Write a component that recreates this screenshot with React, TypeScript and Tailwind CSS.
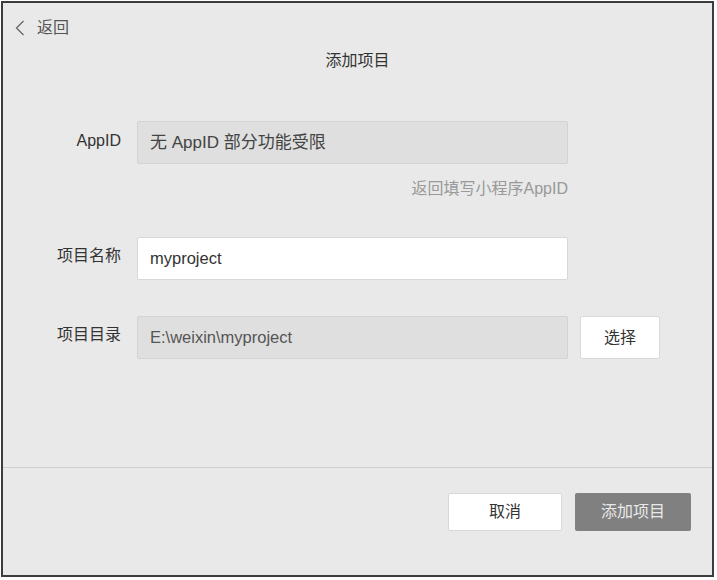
import React from "react";

const font = { fontFamily: '"Liberation Sans", "Noto Sans CJK SC", sans-serif' };

export default function App() {
  return (
    <div className="w-[717px] h-[580px] bg-white pl-[1px] pt-[1px] pr-[3px] pb-[3px]" style={font}>
      <div className="w-full h-full border-2 border-[#3c3c3c] bg-[#e8e9e8] flex flex-col text-[#333]">
        <div className="flex-1 flex flex-col">
          <div className="mt-[13px] h-[24px] pl-[12px] flex items-center gap-[12px] text-[#555]">
            <svg width="10" height="16" viewBox="0 0 10 16" fill="none">
              <path d="M8.5 1 L1.5 8 L8.5 15" stroke="#666" strokeWidth="1.3" />
            </svg>
            <span className="text-[16px] leading-none">返回</span>
          </div>
          <div className="mt-[11px] h-[20px] flex items-center justify-center text-[16px] text-[#333]">添加项目</div>

          <div className="mt-[50px] flex items-start">
            <div className="w-[118px] text-right text-[16px] pt-[9px] leading-[22px] text-[#333]">AppID</div>
            <div className="ml-[16px] w-[431px] h-[43px] bg-[#dedfde] border border-[#d2d3d2] rounded-[2px] flex items-center pl-[12px] text-[17px] text-[#444]">
              无 AppID 部分功能受限
            </div>
          </div>
          <div className="mt-[16px] h-[18px] flex">
            <div className="w-[565px] text-right text-[16px] leading-[18px] text-[#999]">返回填写小程序AppID</div>
          </div>

          <div className="mt-[39px] flex items-start">
            <div className="w-[118px] text-right text-[16px] pt-[8px] leading-[22px] text-[#333]">项目名称</div>
            <div className="ml-[16px] w-[431px] h-[43px] bg-white border border-[#d8d8d8] rounded-[2px] flex items-center pl-[12px] text-[16.5px] text-[#333]">
              myproject
            </div>
          </div>

          <div className="mt-[36px] flex items-start">
            <div className="w-[118px] text-right text-[16px] pt-[8px] leading-[22px] text-[#333]">项目目录</div>
            <div className="ml-[16px] w-[431px] h-[43px] bg-[#dedfde] border border-[#d2d3d2] rounded-[2px] flex items-center pl-[12px] text-[16.5px] text-[#555]">
              E:\weixin\myproject
            </div>
            <div className="ml-[12px] w-[80px] h-[43px] bg-white border border-[#d8d8d8] rounded-[2px] flex items-center justify-center text-[16px] text-[#333]">
              选择
            </div>
          </div>
        </div>
        <div className="h-[108px] border-t border-[#cfd0cf] flex justify-end items-start pt-[25px] pr-[21px] gap-[13px]">
          <div className="w-[114px] h-[38px] bg-white border border-[#d8d8d8] rounded-[2px] flex items-center justify-center text-[16px] text-[#333]">
            取消
          </div>
          <div className="w-[116px] h-[38px] bg-[#808080] rounded-[2px] flex items-center justify-center text-[16px] text-[#e8e8e8]">
            添加项目
          </div>
        </div>
      </div>
    </div>
  );
}
